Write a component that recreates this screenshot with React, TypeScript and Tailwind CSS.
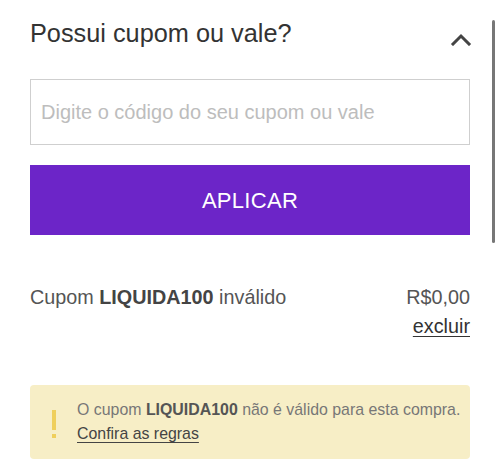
import { useState } from "react";

function ChevronUp() {
  return (
    <svg width="22" height="14" viewBox="0 0 22 14" fill="none">
      <path d="M3 12 L11 4 L19 12" stroke="#444" strokeWidth="3" strokeLinecap="square" />
    </svg>
  );
}

export default function App() {
  const [code, setCode] = useState("");

  return (
    <div
      className="relative w-[500px] h-[471px] bg-white overflow-hidden"
      style={{ fontFamily: '"Liberation Sans", Arial, sans-serif' }}
    >
      <div className="px-[30px] pt-[18px]">
        <div className="flex justify-between items-start">
          <h2 className="text-[25.3px] leading-[30px] text-[#333]">Possui cupom ou vale?</h2>
          <button className="mt-[14px] -mr-[2px]">
            <ChevronUp />
          </button>
        </div>

        <input
          value={code}
          onChange={(e) => setCode(e.target.value)}
          placeholder="Digite o código do seu cupom ou vale"
          className="mt-[31px] w-full h-[66px] border border-[#cfcfcf] px-[10px] text-[20px] text-[#333] placeholder:text-[#bdbdbd] outline-none"
        />

        <button className="mt-[20px] w-full h-[70px] bg-[#6c25c8] text-white text-[22px] tracking-[0.3px]">
          APLICAR
        </button>

        <div className="mt-[50px] flex justify-between items-start text-[19.8px] leading-[24px] text-[#555]">
          <p>
            Cupom <b className="text-[#444]">LIQUIDA100</b> inválido
          </p>
          <div className="flex flex-col items-end">
            <span>R$0,00</span>
            <button className="mt-[5px] text-[#333] underline underline-offset-[3px]">excluir</button>
          </div>
        </div>

        <div className="mt-[47px] flex items-center gap-[21px] bg-[#f7eec6] rounded-[4px] pl-[22px] pr-[8px] py-[13px]">
          <div className="flex flex-col items-center gap-[4px] mt-[3px]">
            <span className="w-[4px] h-[20px] bg-[#efcf5c]" />
            <span className="w-[4px] h-[4px] bg-[#efcf5c]" />
          </div>
          <div className="text-[15.9px] leading-[24px] text-[#777]">
            <p className="whitespace-nowrap">
              O cupom <b className="text-[#555]">LIQUIDA100</b> não é válido para esta compra.
            </p>
            <a href="#" className="text-[#444] underline underline-offset-[3px]">
              Confira as regras
            </a>
          </div>
        </div>
      </div>

      <div className="absolute right-[5px] top-[20px] w-[3px] h-[223px] bg-[#777] rounded-full" />
    </div>
  );
}
